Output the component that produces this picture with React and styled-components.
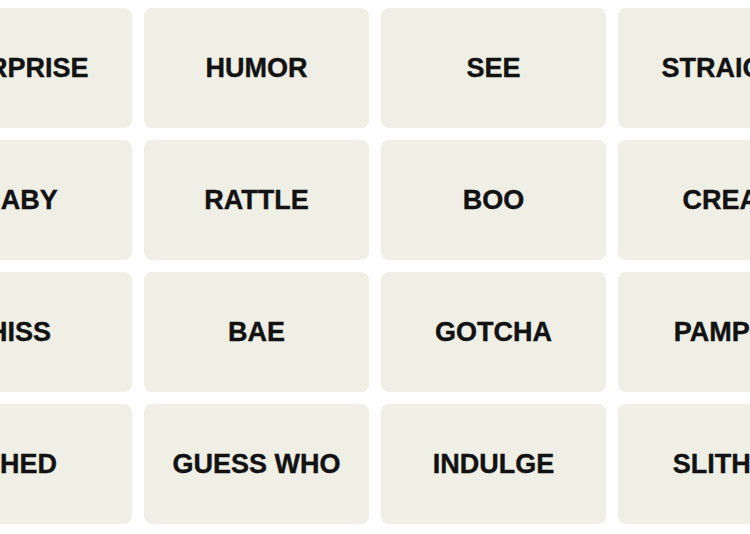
import React from "react";
import styled, { createGlobalStyle } from "styled-components";

const Global = createGlobalStyle`
  html, body { margin: 0; padding: 0; background: #ffffff; overflow: hidden; }
  body { width: 750px; height: 534px; }
`;

const Viewport = styled.div`
  width: 750px;
  height: 534px;
  overflow: hidden;
  background: #ffffff;
`;

const Grid = styled.div`
  display: grid;
  grid-template-columns: repeat(4, 225px);
  grid-auto-rows: 120px;
  gap: 12px;
  margin-left: -93px;
  padding-top: 8px;
  width: max-content;
`;

const Tile = styled.div`
  display: flex;
  align-items: center;
  justify-content: center;
  background: #efefe6;
  border-radius: 8px;
  font-family: "Liberation Sans", Arial, sans-serif;
  font-weight: 700;
  font-size: 27px;
  color: #121212;
  -webkit-text-stroke: 0.4px #121212;
  text-transform: uppercase;
  white-space: nowrap;
  user-select: none;
`;

const words = [
  "Surprise", "Humor", "See", "Straight",
  "Baby", "Rattle", "Boo", "Creak",
  "Hiss", "Bae", "Gotcha", "Pamper",
  "Shed", "Guess Who", "Indulge", "Slither",
];

export default function App() {
  return (
    <Viewport>
      <Global />
      <Grid>
        {words.map((w) => (
          <Tile key={w}>{w}</Tile>
        ))}
      </Grid>
    </Viewport>
  );
}
